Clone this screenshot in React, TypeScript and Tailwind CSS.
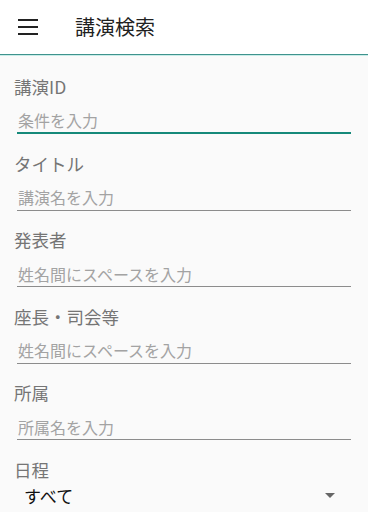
import React from 'react';

const fields = [
  { label: '講演ID', placeholder: '条件を入力', focused: true },
  { label: 'タイトル', placeholder: '講演名を入力' },
  { label: '発表者', placeholder: '姓名間にスペースを入力' },
  { label: '座長・司会等', placeholder: '姓名間にスペースを入力' },
  { label: '所属', placeholder: '所属名を入力' },
];

function Field({ label, placeholder, focused }: { label: string; placeholder: string; focused?: boolean }) {
  return (
    <div className="mb-[17.6px] flex flex-col">
      <span className="px-[14px] text-[17.5px] leading-[24px] text-[#757575]">{label}</span>
      <div
        className={`mx-[17px] mt-[9px] flex h-[26px] items-center pl-px ${
          focused ? 'border-b-2 border-[#15897a]' : 'border-b border-[#8c8c8c]'
        }`}
      >
        <span className="text-[16px] leading-[22px] text-[#a3a3a3]">{placeholder}</span>
      </div>
    </div>
  );
}

export default function App() {
  return (
    <div
      className="h-[512px] w-[368px] overflow-hidden bg-[#fafafa]"
      style={{ fontFamily: '"Noto Sans CJK JP", "Noto Sans", sans-serif' }}
    >
      <header className="flex h-[55px] items-center border-b border-[#3f938d] bg-white shadow-[0_1px_0_#c9ece8]">
        <button className="ml-[18px] flex h-[20px] w-[20px] flex-col justify-between py-[2px]">
          <span className="block h-[2px] w-full bg-[#222]" />
          <span className="block h-[2px] w-full bg-[#222]" />
          <span className="block h-[2px] w-full bg-[#222]" />
        </button>
        <h1 className="ml-[37px] text-[20px] leading-none text-[#212121]">講演検索</h1>
      </header>

      <main className="pt-[20px]">
        {fields.map((f) => (
          <Field key={f.label} {...f} />
        ))}
        <div className="flex flex-col">
          <span className="px-[14px] text-[17.5px] leading-[24px] text-[#757575]">日程</span>
          <div className="mt-[2px] flex items-center justify-between pl-[24px] pr-[33px]">
            <span className="text-[17px] leading-[24px] text-[#111]">すべて</span>
            <span className="h-0 w-0 border-x-[5px] border-t-[5px] border-x-transparent border-t-[#666]" />
          </div>
        </div>
      </main>
    </div>
  );
}
